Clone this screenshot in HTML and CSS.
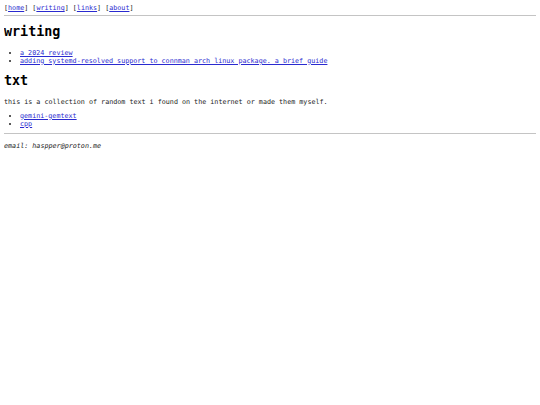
FILE: index.html
```html
<!DOCTYPE html>
<html>
<head>
<meta charset="utf-8">
<title>writing</title>
<link rel="stylesheet" href="styles.css">
</head>
<body>
<nav class="nav">[<a href="#">home</a>] [<a href="#">writing</a>] [<a href="#">links</a>] [<a href="#">about</a>]</nav>
<hr class="rule">
<h1 class="title">writing</h1>
<ul class="list">
<li><a href="#">a 2024 review</a></li>
<li><a href="#">adding systemd-resolved support to connman arch linux package. a brief guide</a></li>
</ul>
<h1 class="title">txt</h1>
<p class="text">this is a collection of random text i found on the internet or made them myself.</p>
<ul class="list">
<li><a href="#">gemini-gemtext</a></li>
<li><a href="#">cpp</a></li>
</ul>
<hr class="rule">
<p class="email"><em>email: haspper@proton.me</em></p>
</body>
</html>
```
FILE: styles.css
```css
body {
  margin: 4px;
  font-family: "DejaVu Sans Mono", monospace;
  font-size: 6.72px;
  color: #222;
  background: #fff;
}
a {
  color: #2a2ad0;
}
.nav {
  margin: 0;
}
.rule {
  margin: 2.5px 0;
  border: none;
  border-top: 1px solid #c4c4c4;
  height: 0;
}
.title {
  font-size: 13.4px;
  font-weight: bold;
  margin: 8.5px 0 9.8px;
  color: #000;
}
.list {
  margin: 5.7px 0;
  padding-left: 16px;
}
.text {
  margin: 6.7px 0 5.7px;
}
.email {
  margin: 7.5px 0;
}
```
